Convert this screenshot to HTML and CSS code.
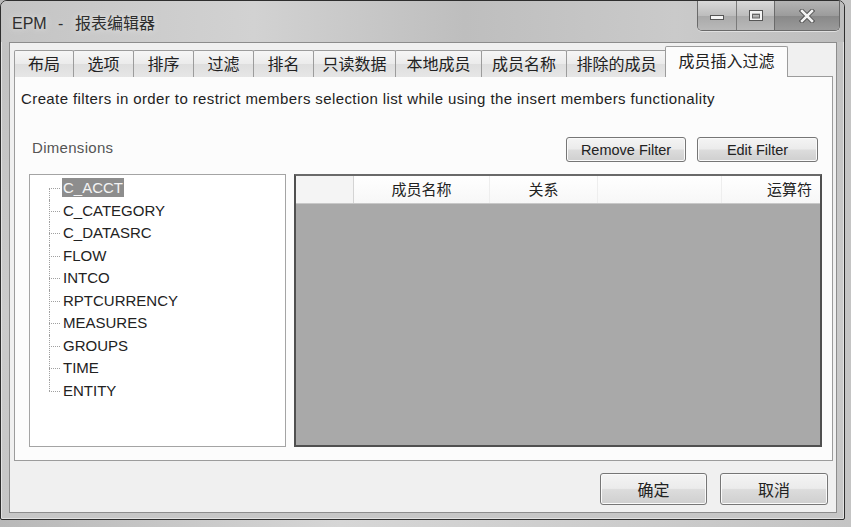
FILE: index.html
```html
<!DOCTYPE html>
<html lang="zh-CN">
<head>
    <meta charset="UTF-8">
    <title>EPM - 报表编辑器</title>
    <link rel="stylesheet" href="styles.css">
</head>
<body>
    <div class="window">
        <div class="titlebar">
            <span class="title">EPM - 报表编辑器</span>
            <div class="controls">
                <div class="ctl ctl-min">
                    <svg width="16" height="10" viewBox="0 0 16 10"><rect x="1.5" y="4.5" width="13" height="4" fill="#f4f4f4" stroke="#555"/></svg>
                </div>
                <div class="ctl ctl-max">
                    <svg width="16" height="13" viewBox="0 0 16 13"><rect x="1.5" y="1.5" width="13" height="10" fill="none" stroke="#555" stroke-width="1"/><rect x="3" y="3" width="10" height="7" fill="none" stroke="#f4f4f4" stroke-width="2"/><rect x="4.5" y="5.5" width="7" height="3.5" fill="none" stroke="#666" stroke-width="1"/></svg>
                </div>
                <div class="ctl ctl-close">
                    <svg width="16" height="14" viewBox="0 0 16 14"><path d="M3 2 L13 12 M13 2 L3 12" stroke="#555" stroke-width="4.5" stroke-linecap="square"/><path d="M3 2 L13 12 M13 2 L3 12" stroke="#f2f2f2" stroke-width="2.5" stroke-linecap="square"/></svg>
                </div>
            </div>
        </div>

        <div class="client">
            <div class="tabs">
                <div class="tab" style="width:60px">布局</div>
                <div class="tab" style="width:61px">选项</div>
                <div class="tab" style="width:61px">排序</div>
                <div class="tab" style="width:61px">过滤</div>
                <div class="tab" style="width:61px">排名</div>
                <div class="tab" style="width:83px">只读数据</div>
                <div class="tab" style="width:87px">本地成员</div>
                <div class="tab" style="width:86px">成员名称</div>
                <div class="tab" style="width:101px">排除的成员</div>
                <div class="tab active" style="width:123px">成员插入过滤</div>
            </div>

            <div class="panel">
                <p class="desc">Create filters in order to restrict members selection list while using the insert members functionality</p>

                <div class="toolbar">
                    <span class="label">Dimensions</span>
                    <div class="tool-buttons">
                        <button class="btn btn-remove">Remove Filter</button>
                        <button class="btn btn-edit">Edit Filter</button>
                    </div>
                </div>

                <div class="content">
                    <div class="tree">
                        <ul>
                            <li><span class="node selected">C_ACCT</span></li>
                            <li><span class="node">C_CATEGORY</span></li>
                            <li><span class="node">C_DATASRC</span></li>
                            <li><span class="node">FLOW</span></li>
                            <li><span class="node">INTCO</span></li>
                            <li><span class="node">RPTCURRENCY</span></li>
                            <li><span class="node">MEASURES</span></li>
                            <li><span class="node">GROUPS</span></li>
                            <li><span class="node">TIME</span></li>
                            <li><span class="node">ENTITY</span></li>
                        </ul>
                    </div>

                    <div class="grid">
                        <div class="grid-head">
                            <div class="col col-row"></div>
                            <div class="col col-name">成员名称</div>
                            <div class="col col-rel">关系</div>
                            <div class="col col-blank"></div>
                            <div class="col col-op">运算符</div>
                        </div>
                        <div class="grid-body"></div>
                    </div>
                </div>
            </div>

            <div class="footer">
                <button class="btn btn-ok">确定</button>
                <button class="btn btn-cancel">取消</button>
            </div>
        </div>
    </div>
</body>
</html>
```

FILE: styles.css
```css
* {
    box-sizing: border-box;
}

body {
    margin: 0;
    width: 851px;
    height: 527px;
    overflow: hidden;
    background: linear-gradient(to right, #b8b8b8, #d6d6d6 40%, #c4c4c4);
    font-family: "Liberation Sans", "Noto Sans CJK SC", sans-serif;
    color: #1c1c1c;
}

.window {
    width: 845px;
    height: 520px;
    border: 1px solid #2e2e2e;
    border-radius: 7px 7px 2px 2px;
    background: linear-gradient(to bottom, #c9c9c9, #c2c2c2 10%, #cbcbcb 60%, #c6c6c6);
    box-shadow: inset 0 0 0 1px #e2e2e2;
    display: flex;
    flex-direction: column;
}

/* title bar */
.titlebar {
    height: 41px;
    display: flex;
    justify-content: space-between;
    align-items: flex-start;
    padding-left: 11px;
    background: linear-gradient(to right, #c4c4c4, #d2d2d2 30%, #bebebe 55%, #cacaca 80%, #bdbdbd);
    border-radius: 6px 6px 0 0;
}

.title {
    margin-top: 9px;
    font-size: 16px;
    word-spacing: 7px;
    color: #2e2e2e;
    text-shadow: 0 0 6px #e8e8e8;
}

.controls {
    display: flex;
    margin-right: 4px;
    height: 30px;
    border: 1px solid #6a6a6a;
    border-top: none;
    border-radius: 0 0 5px 5px;
    overflow: hidden;
    box-shadow: 0 1px 0 #e0e0e0;
}

.ctl {
    display: flex;
    align-items: center;
    justify-content: center;
    height: 100%;
    background: linear-gradient(to bottom, #d8d8d8, #bdbdbd 50%, #a9a9a9 51%, #b9b9b9);
}

.ctl-min {
    width: 39px;
    border-right: 1px solid #7a7a7a;
}

.ctl-max {
    width: 38px;
    border-right: 1px solid #6a6a6a;
}

.ctl-close {
    width: 64px;
    background: linear-gradient(to bottom, #b4b4b4, #9c9c9c 50%, #888 51%, #9a9a9a);
}

/* client area */
.client {
    flex: 1;
    margin: 0 7px 6px 8px;
    background: #f0f0f0;
    border: 1px solid #8c8c8c;
    padding: 4px 3px 0 4px;
    display: flex;
    flex-direction: column;
}

.tabs {
    display: flex;
    align-items: flex-end;
    height: 30px;
    margin-bottom: -1px;
    position: relative;
    z-index: 1;
}

.tab {
    height: 27px;
    margin-left: -1px;
    border: 1px solid #9c9c9c;
    border-bottom: none;
    border-radius: 2px 2px 0 0;
    background: linear-gradient(to bottom, #f6f6f6, #ebebeb 50%, #dedede 51%, #e6e6e6);
    font-size: 16px;
    font-family: "Noto Sans CJK SC", sans-serif;
    line-height: 24px;
    text-align: center;
    color: #222;
}

.tab:first-child {
    margin-left: 0;
}

.tab.active {
    height: 31px;
    margin-left: -2px;
    background: #fcfcfc;
    line-height: 26px;
}

.panel {
    height: 385px;
    background: #fcfcfc;
    border: 1px solid #9c9c9c;
    padding: 13px 10px 0 14px;
}

.desc {
    margin: 0 0 0 -8px;
    height: 18px;
    font-size: 15px;
    letter-spacing: 0.4px;
    line-height: 18px;
    color: #222;
    white-space: nowrap;
}

.toolbar {
    display: flex;
    justify-content: space-between;
    align-items: center;
    height: 25px;
    margin-top: 29px;
    padding-right: 4px;
}

.label {
    margin-left: 3px;
    margin-top: -4px;
    font-size: 15px;
    letter-spacing: 0.3px;
    color: #555;
}

.tool-buttons {
    display: flex;
    gap: 11px;
}

.btn {
    font-family: "Liberation Sans", "Noto Sans CJK SC", sans-serif;
    color: #222;
    border: 1px solid #767676;
    border-radius: 3px;
    background: linear-gradient(to bottom, #f4f4f4, #ebebeb 48%, #dcdcdc 52%, #cfcfcf);
    box-shadow: inset 0 0 0 1px #fafafa;
    padding: 0;
}

.btn-remove,
.btn-edit {
    height: 25px;
    font-size: 14.5px;
}

.btn-remove {
    width: 120px;
}

.btn-edit {
    width: 121px;
}

.content {
    display: flex;
    gap: 8px;
    height: 273px;
    margin-top: 12px;
}

/* dimension tree */
.tree {
    width: 257px;
    border: 1px solid #a4a4a4;
    background: #fff;
    padding: 2px 0 0 32px;
}

.tree ul {
    list-style: none;
    margin: 0;
    padding: 0;
}

.tree li {
    position: relative;
    height: 22.5px;
    line-height: 22px;
    font-size: 15px;
    color: #222;
}

.tree li::before {
    content: "";
    position: absolute;
    left: -13px;
    top: 0;
    bottom: 0;
    border-left: 1px dotted #a0a0a0;
}

.tree li:first-child::before {
    top: 11px;
}

.tree li:last-child::before {
    bottom: 11px;
}

.tree li::after {
    content: "";
    position: absolute;
    left: -13px;
    top: 11px;
    width: 11px;
    border-top: 1px dotted #a0a0a0;
}

.node {
    padding: 1px 1px;
}

.node.selected {
    background: #8d8d8d;
    color: #f4f4f4;
}

/* filter grid */
.grid {
    flex: 1;
    display: flex;
    flex-direction: column;
    border: 2px solid #505050;
    border-top-color: #6a6a6a;
    background: #a9a9a9;
}

.grid-head {
    display: flex;
    height: 28px;
    background: linear-gradient(to bottom, #fff, #f7f7f7);
    border-bottom: 1px solid #c8c8c8;
    font-family: "Noto Sans CJK SC", sans-serif;
    font-size: 15px;
    line-height: 26px;
    color: #222;
}

.col {
    border-right: 1px solid #eeeeee;
}

.col-row {
    width: 58px;
    background: #f4f4f4;
    border-right-color: #d4d4d4;
}

.col-name {
    width: 136px;
    text-align: center;
}

.col-rel {
    width: 108px;
    text-align: center;
}

.col-blank {
    width: 124px;
}

.col-op {
    flex: 1;
    border-right: none;
    text-align: right;
    padding-right: 8px;
}

.grid-body {
    flex: 1;
}

/* dialog buttons */
.footer {
    display: flex;
    justify-content: flex-end;
    gap: 13px;
    padding: 12px 5px 0 0;
}

.btn-ok,
.btn-cancel {
    height: 32px;
    font-size: 16px;
    font-family: "Noto Sans CJK SC", sans-serif;
}

.btn-ok {
    width: 107px;
}

.btn-cancel {
    width: 108px;
}
```
